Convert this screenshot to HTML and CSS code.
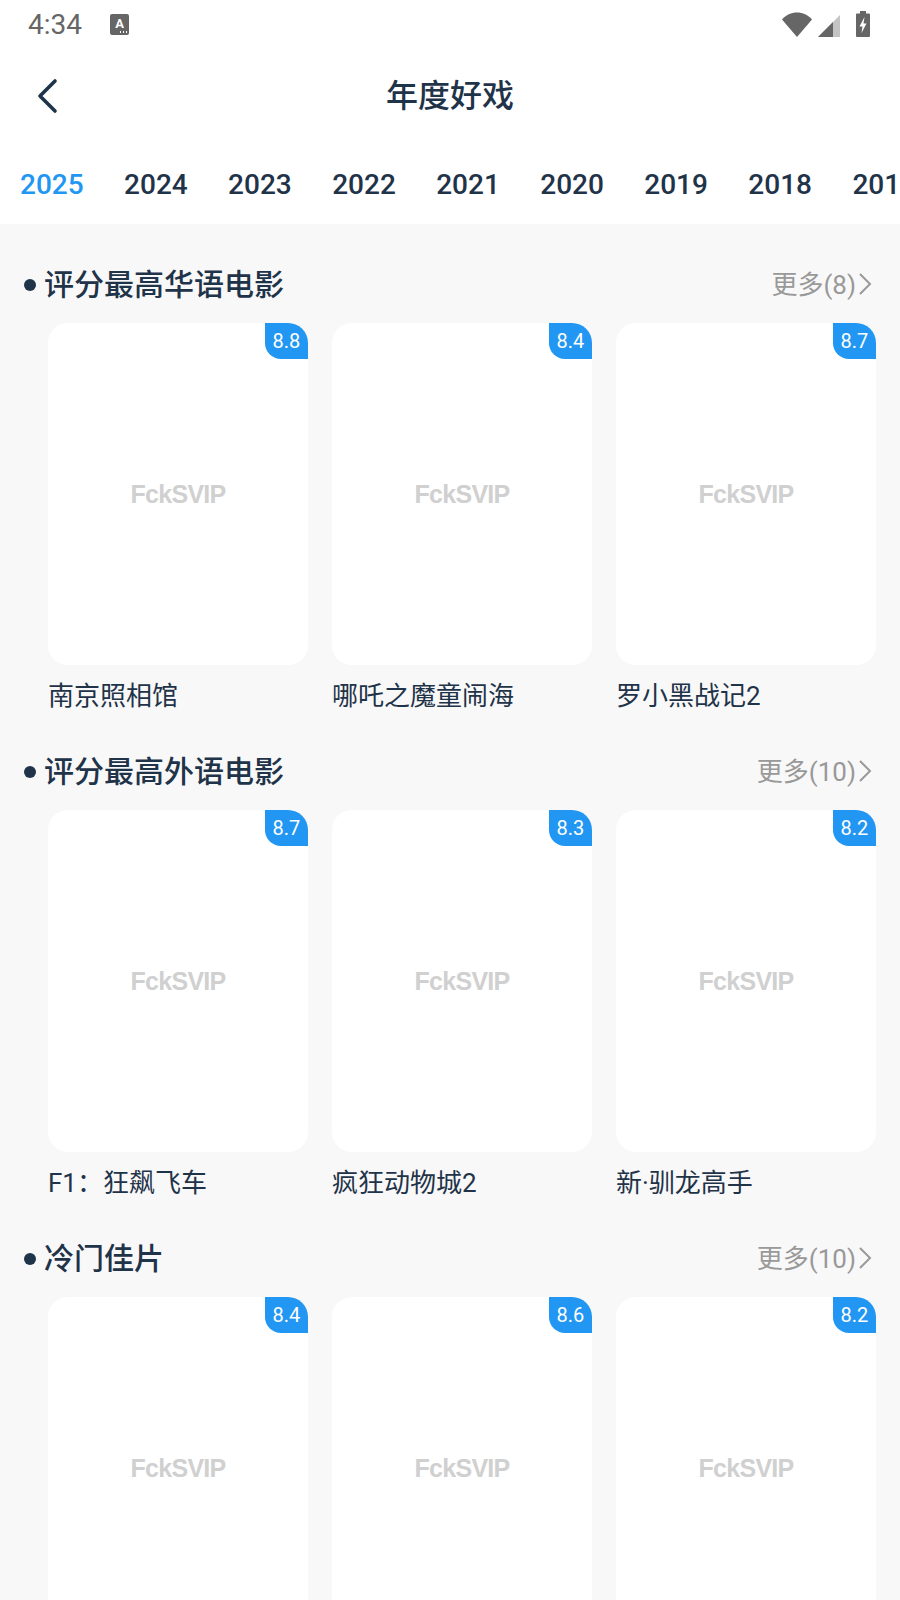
FILE: index.html

```html
<!DOCTYPE html>
<html lang="zh-CN">
<head>
  <meta charset="UTF-8">
  <meta name="viewport" content="width=device-width, initial-scale=1.0">
  <title>年度好戏</title>
  <link rel="stylesheet" href="styles.css">
</head>
<body>
  <header class="top">
    <div class="status">
      <span class="time">4:34</span>
      <span class="app-icon">A<i class="dots"></i></span>
      <span class="status-right">
        <svg class="wifi" width="30" height="25" viewBox="0 0 30 25"><path d="M0 7.500C4 2.800 9.200 0.500 15 0.500s11 2.300 15 7L15 25z" fill="#666"/></svg>
        <svg class="signal" width="22" height="22" viewBox="0 0 22 22"><path d="M0 22L22 0v22z" fill="#c4c4c4"/><path d="M0 22L15 7v15z" fill="#666"/></svg>
        <svg class="battery" width="14" height="26" viewBox="0 0 14 26"><path d="M4 0h6v2.500h3a1 1 0 0 1 1 1V25a1 1 0 0 1-1 1H1a1 1 0 0 1-1-1V3.500a1 1 0 0 1 1-1h3z" fill="#666"/><path d="M8.500 6L3.500 15.500h3L5.500 22l5-9.500h-3z" fill="#fff"/></svg>
      </span>
    </div>
    <nav class="nav">
      <svg class="back" width="24" height="40" viewBox="0 0 24 40"><path d="M21 5L6 20 21 35" fill="none" stroke="#1f3349" stroke-width="3.600" stroke-linecap="round" stroke-linejoin="round"/></svg>
      <h1>年度好戏</h1>
    </nav>
    <div class="tabs">
      <span class="tab active">2025</span>
      <span class="tab">2024</span>
      <span class="tab">2023</span>
      <span class="tab">2022</span>
      <span class="tab">2021</span>
      <span class="tab">2020</span>
      <span class="tab">2019</span>
      <span class="tab">2018</span>
      <span class="tab">2017</span>
    </div>
  </header>

  <main class="content">
    <section class="section">
      <div class="head">
        <h2>评分最高华语电影</h2>
        <a class="more">更多(8)<svg width="14" height="24" viewBox="0 0 14 24"><path d="M2 2l10 10L2 22" fill="none" stroke="#999" stroke-width="2"/></svg></a>
      </div>
      <div class="grid">
        <div class="item"><div class="poster"><span class="score">8.8</span><span class="logo">FckSVIP</span></div><p class="name">南京照相馆</p></div>
        <div class="item"><div class="poster"><span class="score">8.4</span><span class="logo">FckSVIP</span></div><p class="name">哪吒之魔童闹海</p></div>
        <div class="item"><div class="poster"><span class="score">8.7</span><span class="logo">FckSVIP</span></div><p class="name">罗小黑战记2</p></div>
      </div>
    </section>

    <section class="section">
      <div class="head">
        <h2>评分最高外语电影</h2>
        <a class="more">更多(10)<svg width="14" height="24" viewBox="0 0 14 24"><path d="M2 2l10 10L2 22" fill="none" stroke="#999" stroke-width="2"/></svg></a>
      </div>
      <div class="grid">
        <div class="item"><div class="poster"><span class="score">8.7</span><span class="logo">FckSVIP</span></div><p class="name">F1：狂飙飞车</p></div>
        <div class="item"><div class="poster"><span class="score">8.3</span><span class="logo">FckSVIP</span></div><p class="name">疯狂动物城2</p></div>
        <div class="item"><div class="poster"><span class="score">8.2</span><span class="logo">FckSVIP</span></div><p class="name">新·驯龙高手</p></div>
      </div>
    </section>

    <section class="section">
      <div class="head">
        <h2>冷门佳片</h2>
        <a class="more">更多(10)<svg width="14" height="24" viewBox="0 0 14 24"><path d="M2 2l10 10L2 22" fill="none" stroke="#999" stroke-width="2"/></svg></a>
      </div>
      <div class="grid">
        <div class="item"><div class="poster"><span class="score">8.4</span><span class="logo">FckSVIP</span></div></div>
        <div class="item"><div class="poster"><span class="score">8.6</span><span class="logo">FckSVIP</span></div></div>
        <div class="item"><div class="poster"><span class="score">8.2</span><span class="logo">FckSVIP</span></div></div>
      </div>
    </section>
  </main>
</body>
</html>
```

FILE: styles.css

```css
:root {
  --color-dark: #1f3349;
  --color-blue: #2196f3;
  --color-fondo: #f8f8f8;
  --color-gris: #999;
}

* {
  box-sizing: border-box;
}

html {
  overflow: hidden;
}

body {
  margin: 0;
  height: 1600px;
  overflow: hidden;
  font-family: Roboto, "Noto Sans CJK SC", sans-serif;
  background-color: var(--color-fondo);
  color: var(--color-dark);
}

.top {
  background: white;
}

.status {
  height: 48px;
  display: flex;
  align-items: center;
  padding: 0 30px 0 28px;
  color: #666;
}

.time {
  font-size: 28px;
}

.app-icon {
  position: relative;
  width: 19px;
  height: 21px;
  margin-left: 28px;
  background: #666;
  border-radius: 2px;
  color: white;
  font-size: 13px;
  font-weight: 700;
  line-height: 19px;
  text-align: center;
}

.dots {
  position: absolute;
  right: 2px;
  bottom: 2px;
  width: 7px;
  height: 2px;
  background: repeating-linear-gradient(90deg, white 0 1.500px, transparent 1.500px 3px);
}

.status-right {
  margin-left: auto;
  display: flex;
  align-items: flex-end;
  height: 26px;
}

.signal {
  margin-left: 6px;
}

.battery {
  margin-left: 16px;
}

.nav {
  position: relative;
  height: 96px;
  display: flex;
  align-items: center;
  justify-content: center;
}

.back {
  position: absolute;
  left: 34px;
  top: 28px;
}

h1 {
  margin: 0;
  font-size: 32px;
  font-weight: 500;
  line-height: 1;
}

.tabs {
  height: 80px;
  display: flex;
  align-items: center;
  gap: 40.400px;
  padding: 0 0 0 20px;
  overflow: hidden;
  white-space: nowrap;
  font-size: 28px;
  font-weight: 500;
}

.active {
  color: var(--color-blue);
}

.content {
  padding-top: 39px;
}

.section {
  margin-bottom: 35px;
}

.head {
  height: 44px;
  margin-bottom: 16px;
  padding: 0 28px 0 24px;
  display: flex;
  align-items: center;
  justify-content: space-between;
}

h2 {
  margin: 0;
  display: flex;
  align-items: center;
  gap: 8px;
  font-size: 30px;
  font-weight: 500;
  line-height: 44px;
}

h2::before {
  content: "";
  width: 12px;
  height: 12px;
  border-radius: 50%;
  background: var(--color-dark);
}

.more {
  display: flex;
  align-items: center;
  margin-top: -5px;
  font-size: 26px;
  color: var(--color-gris);
}

.more svg {
  margin: 3px 0 0 2px;
}

.grid {
  display: grid;
  grid-template-columns: repeat(3, 260px);
  gap: 24px;
  padding-left: 48px;
}

.poster {
  position: relative;
  height: 342px;
  background: white;
  border-radius: 20px;
  overflow: hidden;
  display: flex;
  align-items: center;
  justify-content: center;
}

.score {
  position: absolute;
  top: 0;
  right: 0;
  width: 43px;
  height: 36px;
  background: var(--color-blue);
  border-radius: 0 16px 0 16px;
  color: white;
  font-size: 20px;
  line-height: 36px;
  text-align: center;
}

.logo {
  font-family: "Liberation Sans", sans-serif;
  font-size: 25px;
  font-weight: 700;
  letter-spacing: -0.700px;
  color: #d0d0d0;
}

.name {
  margin: 12px 0 0;
  font-size: 26px;
  line-height: 38px;
}
```
